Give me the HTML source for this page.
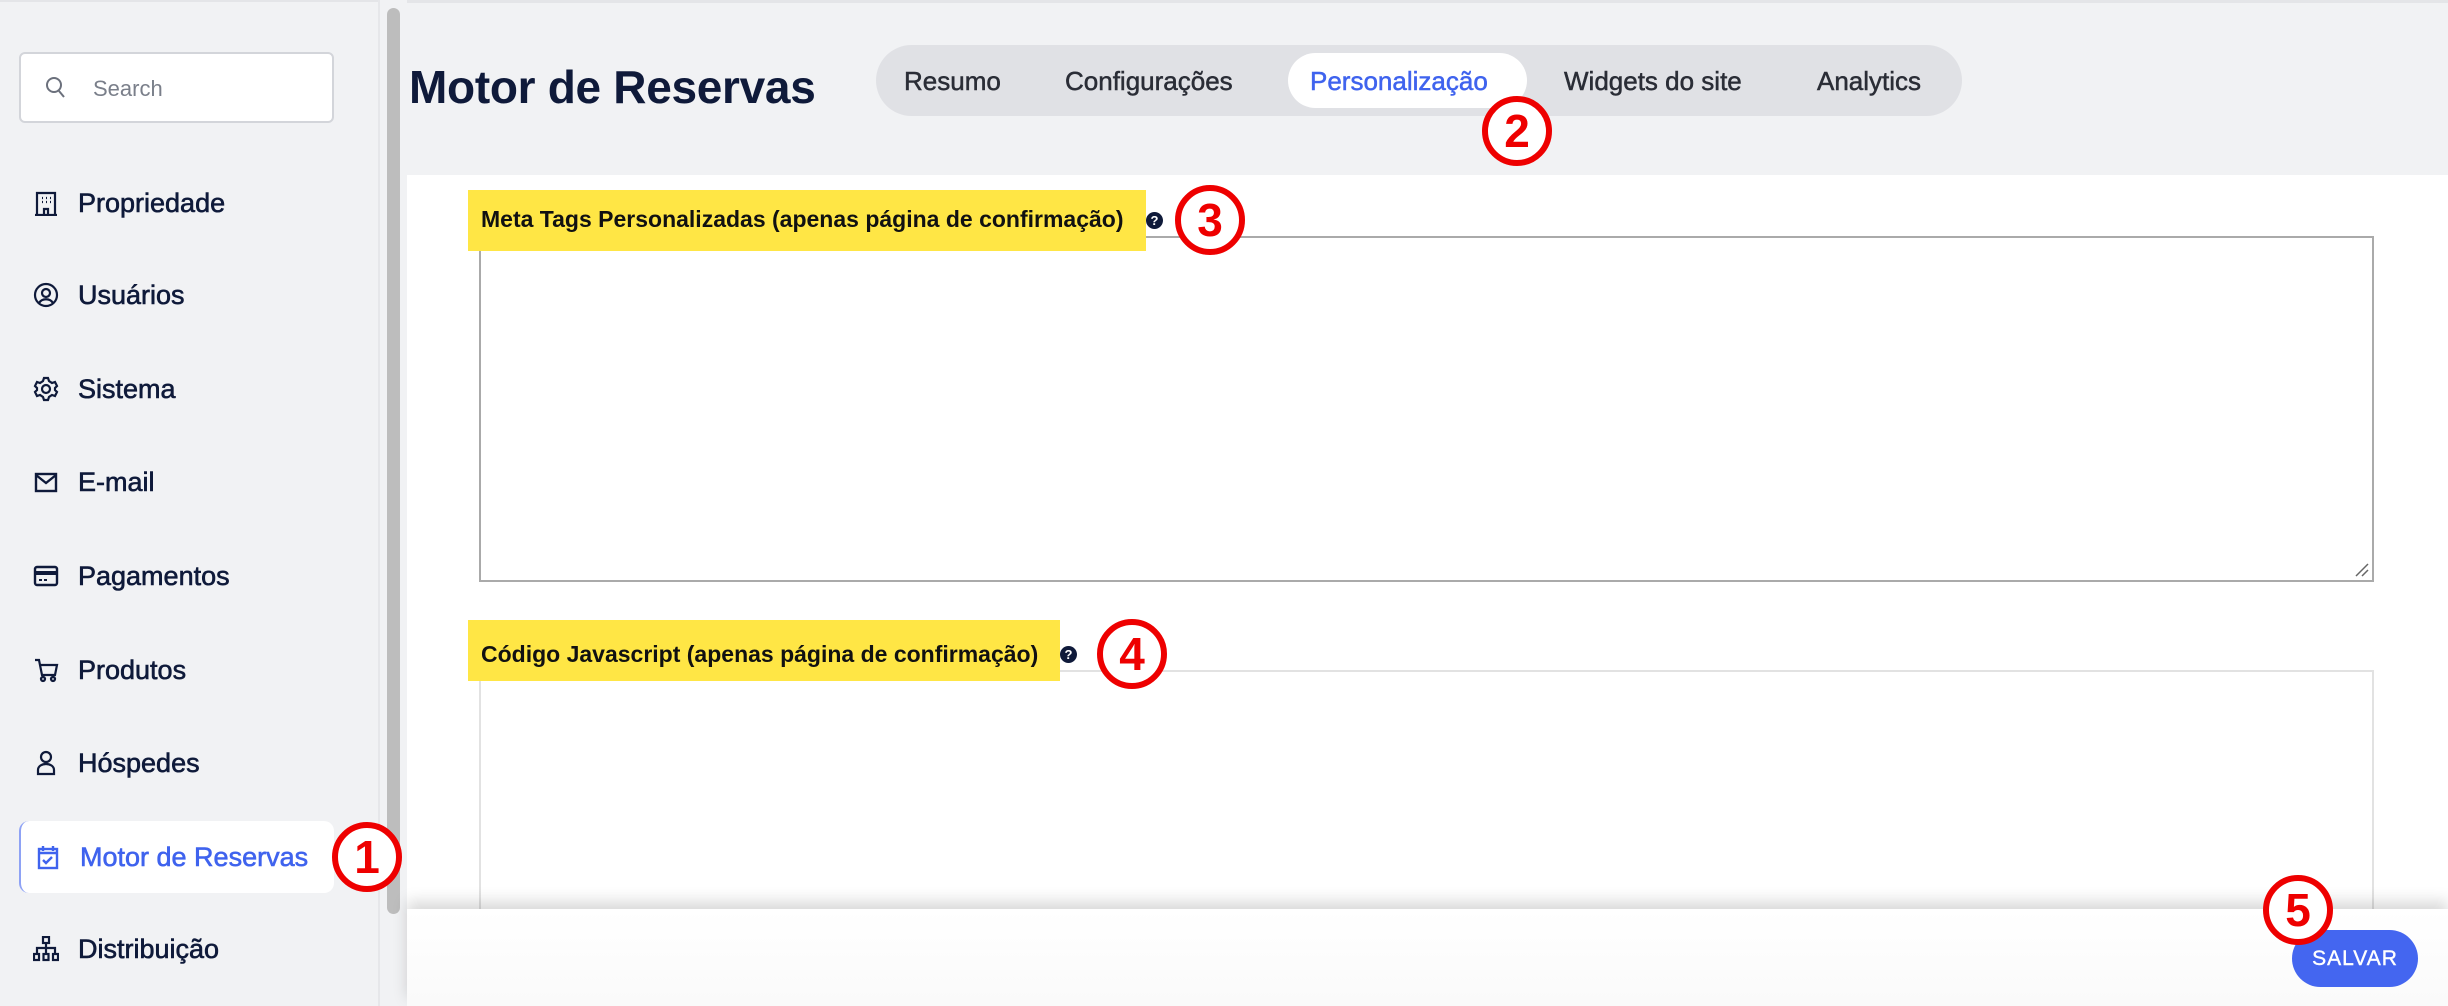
<!DOCTYPE html>
<html><head><meta charset="utf-8"><style>
*{box-sizing:border-box;margin:0;padding:0}
body{width:2448px;height:1006px;overflow:hidden;background:#f1f2f4;font-family:"Liberation Sans",sans-serif;position:relative;color:#0f1a3a}
.abs{position:absolute}
.sidebar{left:0;top:0;width:378px;height:1006px;background:#f1f2f4;border-top:2px solid #e4e5e8}
.search{left:19px;top:52px;width:315px;height:71px;background:#fff;border:2px solid #d3d5da;border-radius:6px}
.search span{position:absolute;left:72px;top:22px;font-size:22px;color:#7a7f8a}
.nav{left:19px;width:315px;height:72px;display:flex;align-items:center;font-size:27px;color:#0f1a3a;-webkit-text-stroke:0.6px #0f1a3a}
.nav svg{position:absolute;left:14px;top:50%;margin-top:-13px}
.nav span{position:absolute;left:59px}
.nav.active{background:#fff;border-radius:10px;border-left:2px solid #8ea2f5;color:#3f63ee;-webkit-text-stroke:0.6px #3f63ee}
.scroll{left:378px;top:0;width:29px;height:1006px;background:#f1f2f4;border-left:2px solid #e6e7ea}
.thumb{left:387px;top:8px;width:13px;height:906px;background:#bdbdbd;border-radius:7px}
.main{left:407px;top:175px;width:2041px;height:831px;background:#fff}
h1{position:absolute;left:409px;top:60px;font-size:46px;font-weight:700;color:#0f1a3a;letter-spacing:-0.3px}
.tabs{left:876px;top:45px;width:1086px;height:71px;background:#e0e1e5;border-radius:36px}
.tab{position:absolute;top:66px;font-size:26px;color:#2a2d36;-webkit-text-stroke:0.5px #2a2d36}
.acttab{left:1288px;top:53px;width:239px;height:55px;background:#fff;border-radius:28px}
.hl{background:#ffe645}
.lbl{font-size:23px;font-weight:700;color:#111}
.q{width:17px;height:17px;border-radius:50%;background:#0f1a3a;color:#fff;font-size:13px;font-weight:700;text-align:center;line-height:17px}
.ta1{left:479px;top:236px;width:1895px;height:346px;border:2px solid #aaa;background:#fff}
.ta2{left:479px;top:670px;width:1895px;height:300px;border:2px solid #e2e2e2;background:#fff}
.circ{width:70px;height:70px;border:6px solid #e00;border-radius:50%;background:#fff;color:#e00;font-weight:700;font-size:46px;text-align:center;line-height:58px}
.footer{left:407px;top:909px;width:2041px;height:97px;background:linear-gradient(#fff,#fafafa);box-shadow:0 -8px 14px rgba(0,0,0,.15)}
.btn{left:2292px;top:930px;width:126px;height:57px;background:#4466f0;border-radius:29px;color:#fff;font-size:21px;text-align:center;line-height:57px;letter-spacing:1px;-webkit-text-stroke:0.4px #fff}
</style></head><body>
<div class="abs sidebar"></div>
<div class="abs search"><svg class="abs" style="left:24px;top:22px" width="22" height="24" viewBox="0 0 22 24"><circle cx="9" cy="9" r="7" fill="none" stroke="#6b707c" stroke-width="2"/><path d="M14 15l5 6" stroke="#6b707c" stroke-width="2"/></svg><span>Search</span></div>

<div class="abs nav" style="top:167px"><svg width="26" height="26" viewBox="0 0 26 26" fill="none" stroke="#0f1a3a" stroke-width="2.2"><path d="M4 3h18v22H4zM2 25h22"/><path d="M9 8h1M13 8h1M17 8h1M9 12h1M13 12h1M17 12h1M11 25v-6h4v6" /></svg><span>Propriedade</span></div>
<div class="abs nav" style="top:259px"><svg width="26" height="26" viewBox="0 0 26 26" fill="none" stroke="#0f1a3a" stroke-width="2.2"><circle cx="13" cy="13" r="11"/><circle cx="13" cy="11" r="4"/><path d="M6 21c3-5 11-5 14 0"/></svg><span>Usuários</span></div>
<div class="abs nav" style="top:353px"><svg width="26" height="26" viewBox="0 0 26 26" fill="none" stroke="#0f1a3a" stroke-width="2.2"><circle cx="13" cy="13" r="4"/><path d="M11 2h4l1 3 3 2 3-1 2 4-2 2v2l2 2-2 4-3-1-3 2-1 3h-4l-1-3-3-2-3 1-2-4 2-2v-2L2 10l2-4 3 1 3-2z"/></svg><span>Sistema</span></div>
<div class="abs nav" style="top:446px"><svg width="26" height="26" viewBox="0 0 26 26" fill="none" stroke="#0f1a3a" stroke-width="2.4"><rect x="3" y="5" width="20" height="17"/><path d="M3 6l10 8 10-8"/></svg><span>E-mail</span></div>
<div class="abs nav" style="top:540px"><svg width="26" height="26" viewBox="0 0 26 26"><rect x="2" y="4" width="22" height="18" rx="2" fill="none" stroke="#0f1a3a" stroke-width="2.4"/><rect x="2" y="8" width="22" height="4" fill="#0f1a3a"/><rect x="6" y="16" width="3" height="2" fill="#0f1a3a"/><rect x="11" y="16" width="3" height="2" fill="#0f1a3a"/></svg><span>Pagamentos</span></div>
<div class="abs nav" style="top:634px"><svg width="26" height="26" viewBox="0 0 26 26" fill="none" stroke="#0f1a3a" stroke-width="2.2"><path d="M2 3h4l3 15h13l2-10H7"/><circle cx="10" cy="22" r="2"/><circle cx="20" cy="22" r="2"/></svg><span>Produtos</span></div>
<div class="abs nav" style="top:727px"><svg width="26" height="26" viewBox="0 0 26 26" fill="none" stroke="#0f1a3a" stroke-width="2.2"><circle cx="13" cy="7" r="5"/><path d="M5 24v-4c0-4 4-6 8-6s8 2 8 6v4z"/></svg><span>Hóspedes</span></div>
<div class="abs nav active" style="top:821px"><svg width="26" height="26" viewBox="0 0 26 26" fill="none" stroke="#3f63ee" stroke-width="2.4"><rect x="4" y="5" width="18" height="19"/><path d="M8 2v5M18 2v5M4 9h18" /><path d="M8 16l3 3 6-6"/></svg><span>Motor de Reservas</span></div>
<div class="abs nav" style="top:913px"><svg width="26" height="26" viewBox="0 0 26 26" fill="none" stroke="#0f1a3a" stroke-width="2.2"><rect x="10" y="1" width="6" height="6"/><path d="M13 7v5M4 17v-5h18v5M13 12v5"/><rect x="1" y="18" width="5" height="6"/><rect x="10.5" y="18" width="5" height="6"/><rect x="20" y="18" width="5" height="6"/></svg><span>Distribuição</span></div>

<div class="abs scroll"></div>
<div class="abs thumb"></div>
<div class="abs" style="left:407px;top:0;width:2041px;height:3px;background:#e4e5e8"></div>
<h1>Motor de Reservas</h1>
<div class="abs tabs"></div>
<div class="abs acttab"></div>
<div class="tab" style="left:904px">Resumo</div>
<div class="tab" style="left:1065px">Configurações</div>
<div class="tab" style="left:1310px;color:#3f63ee;-webkit-text-stroke:0.5px #3f63ee">Personalização</div>
<div class="tab" style="left:1564px">Widgets do site</div>
<div class="tab" style="left:1817px">Analytics</div>

<div class="abs main"></div>
<div class="abs ta1"></div>
<svg class="abs" style="left:2352px;top:560px" width="18" height="18"><path d="M4 16L16 4M10 16l6-6" stroke="#666" stroke-width="1.5"/></svg>
<div class="abs hl" style="left:468px;top:190px;width:678px;height:61px"></div>
<div class="abs lbl" style="left:481px;top:206px">Meta Tags Personalizadas (apenas página de confirmação)</div>
<div class="abs q" style="left:1146px;top:212px">?</div>
<div class="abs ta2"></div>
<div class="abs hl" style="left:468px;top:620px;width:592px;height:61px"></div>
<div class="abs lbl" style="left:481px;top:641px">Código Javascript (apenas página de confirmação)</div>
<div class="abs q" style="left:1060px;top:646px">?</div>

<div class="abs footer"></div>
<div class="abs btn">SALVAR</div>

<div class="abs circ" style="left:332px;top:822px">1</div>
<div class="abs circ" style="left:1482px;top:96px">2</div>
<div class="abs circ" style="left:1175px;top:185px">3</div>
<div class="abs circ" style="left:1097px;top:619px">4</div>
<div class="abs circ" style="left:2263px;top:875px">5</div>
</body></html>
